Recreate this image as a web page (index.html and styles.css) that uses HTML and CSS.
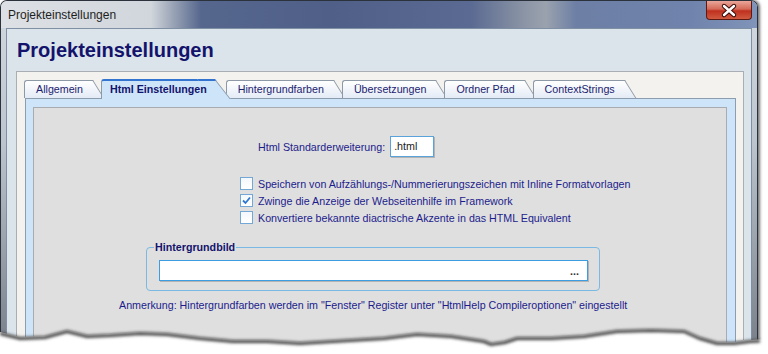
FILE: index.html
```html
<!DOCTYPE html>
<html lang="de">
<head>
<meta charset="UTF-8">
<title>Projekteinstellungen</title>
<link rel="stylesheet" href="styles.css">
</head>
<body>

<div class="window">
<div class="titlebar">
<span class="title">Projekteinstellungen</span>
<button class="close-btn" type="button">
<svg width="44" height="17" viewBox="0 0 44 17">
<path d="M17 4 L27 13 M27 4 L17 13" stroke="#3a0c08" stroke-width="4.4" stroke-linecap="round"/>
<path d="M17 4 L27 13 M27 4 L17 13" stroke="#ffffff" stroke-width="2.4" stroke-linecap="round"/>
</svg>
</button>
</div>

<div class="client">
<h1>Projekteinstellungen</h1>

<!-- Register mit Tabs -->
<div class="panel">
<ul class="tabs">
<li class="tab">Allgemein</li>
<li class="tab active">Html Einstellungen</li>
<li class="tab">Hintergrundfarben</li>
<li class="tab">Übersetzungen</li>
<li class="tab">Ordner Pfad</li>
<li class="tab">ContextStrings</li>
</ul>

<div class="tab-page">
<div class="page-body">
<div class="ext-row">
<label for="htmlExt">Html Standarderweiterung:</label>
<div class="ext-input" id="htmlExt">.html</div>
</div>

<div class="checks">
<div class="check"><span class="box"></span>Speichern von Aufzählungs-/Nummerierungszeichen mit Inline Formatvorlagen</div>
<div class="check"><span class="box checked"><svg width="11" height="11" viewBox="0 0 11 11"><path d="M2 5.5 L4.5 8 L9 2.5" fill="none" stroke="#2f78d2" stroke-width="1.8"/></svg></span>Zwinge die Anzeige der Webseitenhilfe im Framework</div>
<div class="check"><span class="box"></span>Konvertiere bekannte diactrische Akzente in das HTML Equivalent</div>
</div>

<fieldset class="group">
<legend>Hintergrundbild</legend>
<div class="path-input"><span class="dots">...</span></div>
</fieldset>

<p class="note">Anmerkung: Hintergrundfarben werden im "Fenster" Register unter "HtmlHelp Compileroptionen" eingestellt</p>
</div>
</div>
</div>
</div>
</div>

<!-- abgerissene Kante unten -->
<svg class="tear" width="768" height="34" viewBox="0 0 768 34">
<defs>
<filter id="soft" x="-5%" y="-100%" width="110%" height="300%">
<feGaussianBlur stdDeviation="1.4"/>
</filter>
</defs>
<path d="M0 12 L20 17 L45 16 L67 10 L87 15 L110 14 L140 12 L167 13 L200 17 L233 20 L267 20 L300 22 L333 20 L367 18 L384 17 L417 13 L451 15 L484 20 L491 23 L505 21 L517 17 L551 17 L584 15 L617 10 L651 9 L684 10 L700 17 L717 22 L734 22 L750 20 L768 19 L768 34 L0 34 Z" fill="#ffffff"/>
<path d="M0 13.5 L20 18.5 L45 17.5 L67 11.5 L87 16.5 L110 15.5 L140 13.5 L167 14.5 L200 18.5 L233 21.5 L267 21.5 L300 23.5 L333 21.5 L367 19.5 L384 18.5 L417 14.5 L451 16.5 L484 21.5 L491 24.5 L505 22.5 L517 18.5 L551 18.5 L584 16.5 L617 11.5 L651 10.5 L684 11.5 L700 18.5 L717 23.5 L734 23.5 L750 21.5 L760 21" fill="none" stroke="#3a3a3a" stroke-width="3" filter="url(#soft)"/>
</svg>

</body>
</html>
```

FILE: styles.css
```css
body {
margin: 0;
width: 768px;
height: 354px;
position: relative;
overflow: hidden;
background-color: #ffffff;
font-family: "Liberation Sans", Arial, sans-serif;
font-size: 10.7px;
}

.window {
width: 758px;
height: 354px;
box-sizing: border-box;
border: 1px solid #2c323b;
border-bottom: none;
border-radius: 7px 7px 0 0;
background: linear-gradient(to bottom, #d3d9e0 0, #bcc4cd 40%, #767d86 100%);
box-shadow: 2px 0 3px rgba(0, 0, 0, 0.55);
overflow: hidden;
}

.titlebar {
height: 27px;
display: flex;
justify-content: space-between;
align-items: flex-start;
padding-left: 7px;
background: linear-gradient(to right, #dde1e6 0, #d1d6dc 150px, #9aa4b6 172px, #56678e 200px, #4f5f88 330px, #5a6a92 470px, #8d96a6 525px, #9aa2ae 545px, #6d7fa5 575px, #6f83ac 690px, #8195ba 758px);
}

.title {
line-height: 29px;
font-size: 12px;
color: #1e1e1e;
}

.close-btn {
width: 46px;
height: 19px;
margin-right: 5px;
padding: 0;
border: 1px solid #5d1a12;
border-top: none;
border-radius: 0 0 4px 4px;
background: linear-gradient(to bottom, #e9a79a 0, #d46a58 45%, #c0301f 55%, #d05a3f 100%);
}

.close-btn svg {
display: block;
margin: 0 auto;
}

.client {
margin: 0 5px;
height: 330px;
border: 1px solid #7f90a4;
border-bottom: none;
background-color: #dae4ea;
}

h1 {
margin: 0;
padding: 9px 0 0 10px;
font-size: 20px;
line-height: 24px;
color: #13136c;
}

.panel {
margin: 9px 7px 0 9px;
height: 260px;
padding: 8px 7px 0 8px;
border: 1px solid #a9aeb4;
border-bottom: none;
background-color: #f3f2ee;
}

/* Tabs */
.tabs {
display: flex;
align-items: flex-start;
height: 18px;
margin: 0 0 0 -1px;
padding: 0;
list-style: none;
}

.tab {
position: relative;
z-index: 1;
height: 18px;
box-sizing: border-box;
padding: 0 8px 0 11px;
margin-right: 10px;
border: 1px solid #8d99a6;
border-right: none;
border-bottom: none;
border-radius: 3px 0 0 0;
background: linear-gradient(#ffffff, #e4ebf6);
line-height: 17px;
color: #1b2370;
white-space: nowrap;
}

.tab::after {
content: '';
position: absolute;
z-index: -1;
top: -1px;
left: calc(100% - 16px);
width: 18px;
height: 18px;
box-sizing: border-box;
border-top: 1px solid #8d99a6;
border-right: 1px solid #8d99a6;
background: linear-gradient(#ffffff, #e4ebf6);
transform: skewX(32deg);
transform-origin: top left;
}

.tab.active {
z-index: 3;
height: 20px;
margin-top: -1px;
margin-right: 13px;
padding: 0 6px 0 8px;
border-top: 2px solid #3374d0;
background: #cde4f9;
font-weight: bold;
color: #13136c;
}

.tab.active::after {
top: -2px;
height: 20px;
border-top: 2px solid #3374d0;
background: #cde4f9;
transform: skewX(38deg);
}

.tab-page {
position: relative;
z-index: 2;
height: 240px;
padding: 8px 8px 0 7px;
border: 1px solid #8c9db0;
border-bottom: none;
background-color: #cde4f9;
}

.page-body {
height: 240px;
border: 1px solid #a8acb0;
border-bottom: none;
background-color: #dfdfdf;
color: #1c1c8c;
}

.ext-row {
display: flex;
align-items: center;
height: 21px;
margin-top: 28px;
padding-left: 224px;
}

.ext-row label {
margin-right: 5px;
}

.ext-input {
width: 44px;
height: 21px;
box-sizing: border-box;
padding-left: 3px;
border: 1px solid #5aa3da;
background-color: #ffffff;
box-shadow: 1px 1px 0 #b4b4b4;
line-height: 19px;
color: #222222;
}

.checks {
margin-top: 18px;
padding-left: 206px;
}

.check {
display: flex;
align-items: center;
height: 17px;
}

.box {
width: 13px;
height: 13px;
box-sizing: border-box;
margin-right: 5px;
border: 1px solid #74a7d6;
background: linear-gradient(#f4f8fc, #ffffff);
}

.box svg {
display: block;
}

.group {
width: 454px;
box-sizing: border-box;
margin: 15px 0 0 112px;
padding: 6px 11px 9px 12px;
border: 1px solid #7ab9e3;
border-radius: 4px;
}

.group legend {
margin-left: -5px;
padding: 0 1px;
line-height: 13px;
font-weight: bold;
color: #13136c;
}

.path-input {
display: flex;
justify-content: flex-end;
align-items: center;
height: 21px;
box-sizing: border-box;
padding-right: 8px;
border: 1px solid #3d9de0;
background-color: #ffffff;
box-shadow: 1px 1px 0 #b4b4b4;
color: #333333;
font-weight: bold;
}

.note {
margin: 7px 0 0 85px;
line-height: 14px;
}

.tear {
position: absolute;
z-index: 10;
left: 0;
top: 320px;
}
```
